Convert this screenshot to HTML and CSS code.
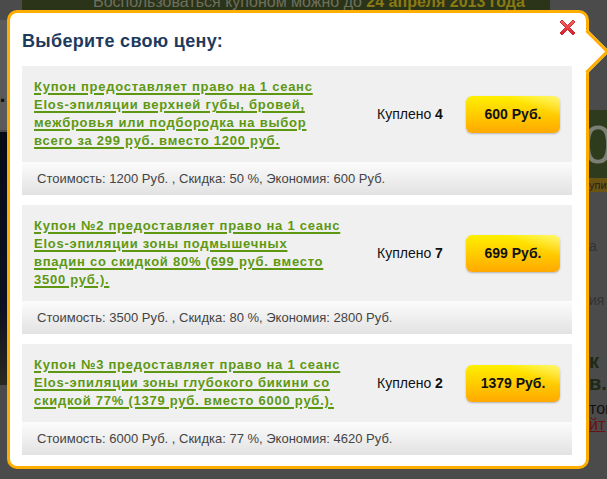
FILE: index.html
```html
<!DOCTYPE html>
<html lang="ru">
<head>
  <meta charset="UTF-8">
  <title>Выберите свою цену</title>
  <link rel="stylesheet" href="styles.css">
</head>
<body>
  <div class="backdrop">
    <div class="bg-top">Воспользоваться купоном можно до <b>24 апреля 2013 года</b></div>
    <div class="bg-left-top">n.</div>
    <div class="bg-left-photo"></div>
    <div class="bg-right-banner">0</div>
    <div class="bg-right-strip">упит</div>
    <div class="bg-right-text t1">а</div>
    <div class="bg-right-text t2">ия о</div>
    <div class="bg-right-text t3">к</div>
    <div class="bg-right-text t4">в.</div>
    <div class="bg-right-text t5">тои</div>
    <div class="bg-right-text t6">йт</div>
  </div>

  <div class="popup">
    <span class="close">
      <svg width="17" height="17" viewBox="0 0 17 17">
        <defs>
          <linearGradient id="xg" x1="0" y1="0" x2="0" y2="1">
            <stop offset="0" stop-color="#ff6a6a"/>
            <stop offset="1" stop-color="#d41a22"/>
          </linearGradient>
        </defs>
        <path d="M3 1 L8.5 6.5 L14 1 L16 3 L10.5 8.5 L16 14 L14 16 L8.5 10.5 L3 16 L1 14 L6.5 8.5 L1 3 Z" fill="url(#xg)" stroke="#b8141c" stroke-width="0.8" stroke-linejoin="round"/>
      </svg>
    </span>
    <h2 class="title">Выберите свою цену:</h2>

    <div class="offer">
      <div class="offer-main">
        <a class="offer-link" href="#">Купон предоставляет право на 1 сеанс<br>Elos-эпиляции верхней губы, бровей,<br>межбровья или подбородка на выбор<br>всего за 299 руб. вместо 1200 руб.</a>
        <div class="bought">Куплено <b>4</b></div>
        <a class="price-btn" href="#">600 Руб.</a>
      </div>
      <div class="offer-info">Стоимость: 1200 Руб. , Скидка: 50 %, Экономия: 600 Руб.</div>
    </div>

    <div class="offer">
      <div class="offer-main">
        <a class="offer-link" href="#">Купон №2 предоставляет право на 1 сеанс<br>Elos-эпиляции зоны подмышечных<br>впадин со скидкой 80% (699 руб. вместо<br>3500 руб.).</a>
        <div class="bought">Куплено <b>7</b></div>
        <a class="price-btn" href="#">699 Руб.</a>
      </div>
      <div class="offer-info">Стоимость: 3500 Руб. , Скидка: 80 %, Экономия: 2800 Руб.</div>
    </div>

    <div class="offer">
      <div class="offer-main">
        <a class="offer-link" href="#">Купон №3 предоставляет право на 1 сеанс<br>Elos-эпиляции зоны глубокого бикини со<br>скидкой 77% (1379 руб. вместо 6000 руб.).</a>
        <div class="bought">Куплено <b>2</b></div>
        <a class="price-btn" href="#">1379 Руб.</a>
      </div>
      <div class="offer-info">Стоимость: 6000 Руб. , Скидка: 77 %, Экономия: 4620 Руб.</div>
    </div>
  </div>
</body>
</html>
```

FILE: styles.css
```css
*{
  box-sizing: border-box;
}
body{
  margin: 0;
  padding: 10px 0 0 7px;
  background: #4b4b4b;
  font-family: "Liberation Sans", Arial, sans-serif;
  position: relative;
  height: 479px;
  overflow: hidden;
}

/* dimmed page behind the popup */
.backdrop div{
  position: absolute;
}
.bg-top{
  left: 22px;
  top: -6px;
  width: 528px;
  height: 16px;
  background: #2b3419;
  color: #6e705e;
  font-size: 16px;
  line-height: 16px;
  padding-left: 71px;
  white-space: nowrap;
  overflow: hidden;
}
.bg-top b{
  color: #8a7a12;
}
.bg-left-top{
  left: 0;
  top: 20px;
  width: 10px;
  height: 110px;
  background: #5a5a5a;
  color: #111;
  font-size: 22px;
  font-weight: bold;
  line-height: 150px;
  text-indent: -14px;
  overflow: hidden;
}
.bg-left-photo{
  left: 0;
  top: 132px;
  width: 10px;
  height: 253px;
  background: linear-gradient(#060b16, #0c1020 70%, #2a2a20);
}
.bg-right-banner{
  left: 589px;
  top: 110px;
  width: 18px;
  height: 68px;
  background: #2e3b1c;
  color: #7c7f74;
  font-size: 54px;
  line-height: 68px;
  overflow: hidden;
  text-indent: -6px;
}
.bg-right-strip{
  left: 589px;
  top: 178px;
  width: 18px;
  height: 14px;
  background: #6b5412;
  color: #222;
  font-size: 11px;
  line-height: 14px;
  overflow: hidden;
}
.bg-right-text{
  left: 589px;
  width: 18px;
  overflow: hidden;
  white-space: nowrap;
  color: #2a2a2a;
  font-size: 14px;
}
.t1{ top: 238px; color: #333; }
.t2{ top: 292px; color: #333; }
.t3{ top: 350px; font-size: 20px; font-weight: bold; color: #1f2a14 !important; }
.t4{ top: 372px; font-size: 20px; font-weight: bold; color: #1f2a14 !important; }
.t5{ top: 400px; font-size: 16px; color: #111 !important; }
.t6{ top: 416px; font-size: 16px; color: #6a1010 !important; text-decoration: underline; }

/* popup */
.popup{
  position: relative;
  z-index: 2;
  width: 582px;
  height: 459px;
  background: #fff;
  border: 3px solid #ffae00;
  border-radius: 10px;
  padding: 3px 14px 0 12px;
}
.popup::after{
  content: '';
  position: absolute;
  right: -17px;
  top: 23px;
  width: 28px;
  height: 28px;
  background: #fff;
  border-top: 3px solid #ffae00;
  border-right: 3px solid #ffae00;
  transform: rotate(45deg);
}
.close{
  position: absolute;
  z-index: 3;
  right: 10px;
  top: 6px;
  width: 17px;
  height: 17px;
}
.title{
  margin: 0;
  height: 50px;
  padding-top: 15px;
  font-size: 18px;
  line-height: 20px;
  letter-spacing: 0.3px;
  color: #1d3a5e;
}

.offer{
  margin-bottom: 10px;
}
.offer-main{
  display: flex;
  align-items: center;
  background: #f0f0f0;
  padding: 12px 12px 12px 12px;
}
.offer-link{
  width: 320px;
  margin-right: 23px;
  color: #5e9812;
  font-size: 13px;
  font-weight: bold;
  line-height: 18px;
  letter-spacing: 0.75px;
  text-decoration: underline;
  text-decoration-thickness: 2px;
  text-underline-offset: 2px;
}
.bought{
  flex: 1;
  font-size: 14px;
  color: #111;
}
.price-btn{
  width: 94px;
  height: 37px;
  line-height: 37px;
  text-align: center;
  border-radius: 6px;
  background:
    linear-gradient(200deg, rgba(255,255,255,0.45) 0, rgba(255,255,255,0) 30%),
    linear-gradient(#fff000, #ffd000 45%, #ffa800);
  box-shadow: 0 1px 2px rgba(0,0,0,0.25);
  color: #111;
  font-size: 14px;
  font-weight: bold;
  text-decoration: none;
}
.offer-info{
  height: 33px;
  line-height: 33px;
  padding-left: 15px;
  background: linear-gradient(#fcfcfc, #e2e2e2);
  color: #444;
  font-size: 13px;
}
```
